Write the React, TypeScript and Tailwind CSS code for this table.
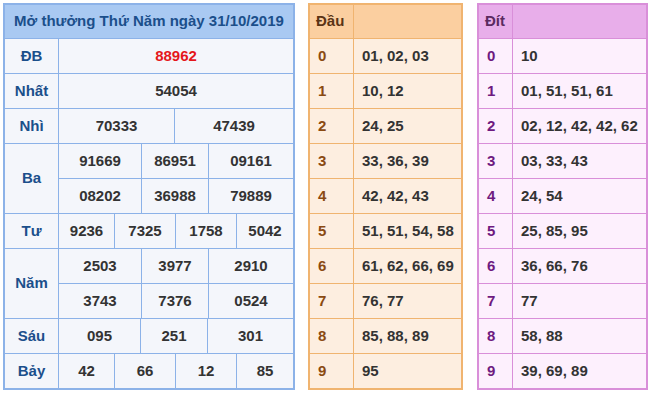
import React from "react";

const font = { fontFamily: '"Liberation Sans", Arial, sans-serif' };

const DAU = [
  ["0", "01, 02, 03"],
  ["1", "10, 12"],
  ["2", "24, 25"],
  ["3", "33, 36, 39"],
  ["4", "42, 42, 43"],
  ["5", "51, 51, 54, 58"],
  ["6", "61, 62, 66, 69"],
  ["7", "76, 77"],
  ["8", "85, 88, 89"],
  ["9", "95"],
];

const DIT = [
  ["0", "10"],
  ["1", "01, 51, 51, 61"],
  ["2", "02, 12, 42, 42, 62"],
  ["3", "03, 33, 43"],
  ["4", "24, 54"],
  ["5", "25, 85, 95"],
  ["6", "36, 66, 76"],
  ["7", "77"],
  ["8", "58, 88"],
  ["9", "39, 69, 89"],
];

const W2 = ["w-[116px]", "flex-1"];
const W3 = ["w-[82px]", "w-[67px]", "flex-1"];
const W4 = ["w-[56px]", "w-[61px]", "w-[61px]", "flex-1"];

function Cells({ values, widths, red }: { values: string[]; widths: string[]; red?: boolean }) {
  return (
    <>
      {values.map((v, i) => (
        <div
          key={i}
          className={`${widths[i]} h-full flex items-center justify-center border-l border-[#8cb2e8] ${red ? "text-[#e5161b]" : "text-[#333333]"}`}
        >
          {v}
        </div>
      ))}
    </>
  );
}

function Label({ text, tall }: { text: string; tall?: boolean }) {
  return (
    <div className={`w-[53px] ${tall ? "h-[69px]" : "h-full"} flex items-center justify-center text-[#1b4f8b]`}>
      {text}
    </div>
  );
}

function Row({ label, values, widths, red }: { label: string; values: string[]; widths: string[]; red?: boolean }) {
  return (
    <div className="flex h-[35px] border-t border-[#8cb2e8]">
      <Label text={label} />
      <Cells values={values} widths={widths} red={red} />
    </div>
  );
}

function DoubleRow({ label, a, b }: { label: string; a: string[]; b: string[] }) {
  return (
    <div className="flex h-[70px] border-t border-[#8cb2e8]">
      <Label text={label} tall />
      <div className="flex-1 flex flex-col border-l border-[#8cb2e8]">
        <div className="flex h-[34px]">
          {a.map((v, i) => (
            <div key={i} className={`${W3[i]} flex items-center justify-center text-[#333333] ${i > 0 ? "border-l border-[#8cb2e8]" : ""}`}>
              {v}
            </div>
          ))}
        </div>
        <div className="flex h-[35px] border-t border-[#8cb2e8]">
          {b.map((v, i) => (
            <div key={i} className={`${W3[i]} flex items-center justify-center text-[#333333] ${i > 0 ? "border-l border-[#8cb2e8]" : ""}`}>
              {v}
            </div>
          ))}
        </div>
      </div>
    </div>
  );
}

function LoTable({
  title,
  rows,
  outer,
  line,
  head,
  body,
  digit,
  headText,
  digitW,
}: {
  title: string;
  rows: string[][];
  outer: string;
  line: string;
  head: string;
  body: string;
  digit: string;
  headText: string;
  digitW: string;
}) {
  return (
    <div className={`border-2 ${outer} ${body}`}>
      <div className={`flex h-[33px] ${head}`}>
        <div className={`${digitW} flex items-center pl-[6px] ${headText}`}>{title}</div>
        <div className={`flex-1 border-l ${line}`} />
      </div>
      {rows.map(([d, v]) => (
        <div key={d} className={`flex h-[35px] border-t ${line}`}>
          <div className={`${digitW} flex items-center pl-[8px] ${digit}`}>{d}</div>
          <div className={`flex-1 flex items-center pl-[8px] border-l ${line} text-[#333333]`}>{v}</div>
        </div>
      ))}
    </div>
  );
}

export default function App() {
  return (
    <div className="w-[651px] h-[396px] bg-white pt-[3px] pl-[3px] flex font-bold text-[15px]" style={font}>
      <div className="w-[292px] h-[387px] border-2 border-[#8cb2e8] bg-[#f4f6fb] flex flex-col">
        <div className="h-[33px] bg-[#a9c9f2] flex items-center justify-center text-[#1b4f8b]">
          Mở thưởng Thứ Năm ngày 31/10/2019
        </div>
        <Row label="ĐB" values={["88962"]} widths={["flex-1"]} red />
        <Row label="Nhất" values={["54054"]} widths={["flex-1"]} />
        <Row label="Nhì" values={["70333", "47439"]} widths={W2} />
        <DoubleRow label="Ba" a={["91669", "86951", "09161"]} b={["08202", "36988", "79889"]} />
        <Row label="Tư" values={["9236", "7325", "1758", "5042"]} widths={W4} />
        <DoubleRow label="Năm" a={["2503", "3977", "2910"]} b={["3743", "7376", "0524"]} />
        <Row label="Sáu" values={["095", "251", "301"]} widths={W3} />
        <Row label="Bảy" values={["42", "66", "12", "85"]} widths={W4} />
      </div>

      <div className="w-[155px] ml-[13px] h-[387px]">
        <LoTable
          title="Đầu"
          rows={DAU}
          outer="border-[#f0b470]"
          line="border-[#f0b470]"
          head="bg-[#fbcfa0]"
          body="bg-[#fdeee0]"
          digit="text-[#8a4a12]"
          headText="text-[#5a3415]"
          digitW="w-[43px]"
        />
      </div>

      <div className="w-[171px] ml-[14px] h-[387px]">
        <LoTable
          title="Đít"
          rows={DIT}
          outer="border-[#d98fd9]"
          line="border-[#d98fd9]"
          head="bg-[#e8aeea]"
          body="bg-[#fdf0fd]"
          digit="text-[#6e1a80]"
          headText="text-[#5a2a5f]"
          digitW="w-[33px]"
        />
      </div>
    </div>
  );
}
